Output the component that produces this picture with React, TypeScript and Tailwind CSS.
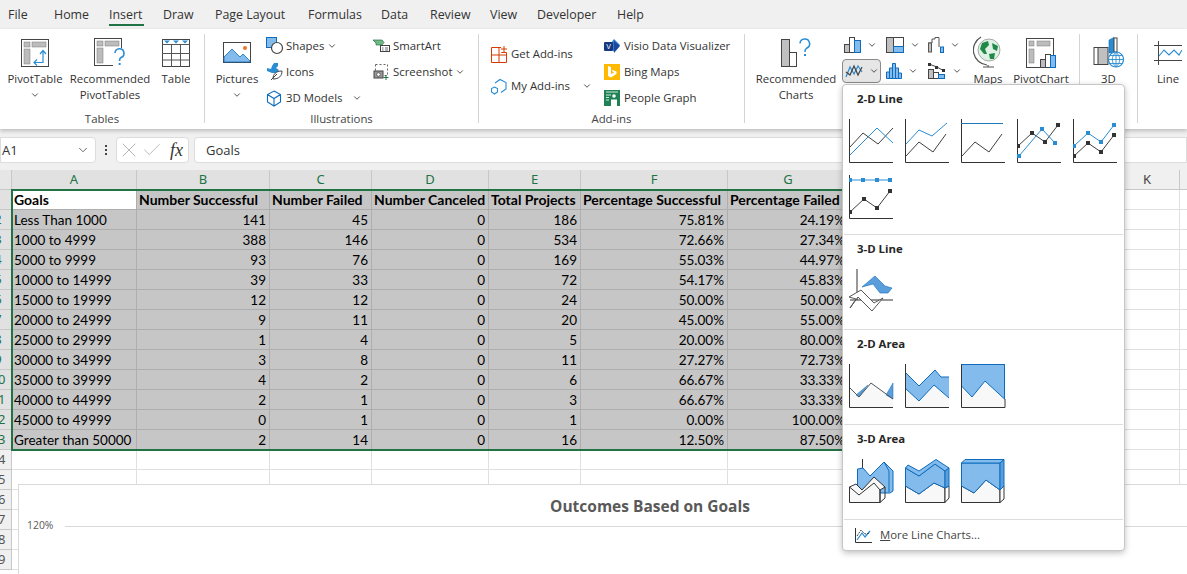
import React from 'react';
import { ChevronDown, Check, X } from 'lucide-react';

const tabs = [
  { name: 'File', cls: 'w-[54px] pl-[8px]' },
  { name: 'Home', cls: 'w-[55px]' },
  { name: 'Insert', cls: 'w-[54px]' },
  { name: 'Draw', cls: 'w-[52px]' },
  { name: 'Page Layout', cls: 'w-[93px]' },
  { name: 'Formulas', cls: 'w-[73px]' },
  { name: 'Data', cls: 'w-[49px]' },
  { name: 'Review', cls: 'w-[60px]' },
  { name: 'View', cls: 'w-[47px]' },
  { name: 'Developer', cls: 'w-[80px]' },
  { name: 'Help', cls: 'w-[40px]' },
];

const rows = [
  ['Less Than 1000', '141', '45', '0', '186', '75.81%', '24.19%'],
  ['1000 to 4999', '388', '146', '0', '534', '72.66%', '27.34%'],
  ['5000 to 9999', '93', '76', '0', '169', '55.03%', '44.97%'],
  ['10000 to 14999', '39', '33', '0', '72', '54.17%', '45.83%'],
  ['15000 to 19999', '12', '12', '0', '24', '50.00%', '50.00%'],
  ['20000 to 24999', '9', '11', '0', '20', '45.00%', '55.00%'],
  ['25000 to 29999', '1', '4', '0', '5', '20.00%', '80.00%'],
  ['30000 to 34999', '3', '8', '0', '11', '27.27%', '72.73%'],
  ['35000 to 39999', '4', '2', '0', '6', '66.67%', '33.33%'],
  ['40000 to 44999', '2', '1', '0', '3', '66.67%', '33.33%'],
  ['45000 to 49999', '0', '1', '0', '1', '0.00%', '100.00%'],
  ['Greater than 50000', '2', '14', '0', '16', '12.50%', '87.50%'],
];
const headers = ['Goals', 'Number Successful', 'Number Failed', 'Number Canceled', 'Total Projects', 'Percentage Successful', 'Percentage Failed'];
const columns = ['A', 'B', 'C', 'D', 'E', 'F', 'G', 'H', 'I', 'J', 'K', 'L'];

const GRAY = '#404040';
const BLUE = '#2a8dd4';
const AREA = '#83bcec';
const DARK = '#0f6cbd';

const Axes = () => <path d="M0.5 0V43.5H44" fill="none" stroke="#333" strokeWidth="1" />;
const Dots = ({ pts, color }: { pts: number[][]; color: string }) => (
  <>
    {pts.map(([x, y]) => (
      <rect key={`${x}-${y}`} x={x - 2} y={y - 2} width="4" height="4" fill={color} />
    ))}
  </>
);
const Glyph: React.FC<{ children: React.ReactNode }> = ({ children }) => (
  <svg width="46" height="46" viewBox="0 0 46 46" className="block">{children}</svg>
);
const Line = ({ d, c, w = 1 }: { d: string; c: string; w?: number }) => <polyline points={d} fill="none" stroke={c} strokeWidth={w} />;

const Line1 = () => <Glyph><Axes /><Line d="1,28 14,14 29,25 44,9" c={GRAY} /><Line d="1,36 28,9 44,24" c={BLUE} /></Glyph>;
const Line2 = () => <Glyph><Axes /><Line d="1,25 14,11 27,17 42,4" c={BLUE} /><Line d="1,37 14,23 28,33 41,15" c={GRAY} /></Glyph>;
const Line3 = () => <Glyph><Axes /><Line d="0,4.5 42,4.5" c="#1f78b8" /><Line d="1,37 14,23 28,33 41,15" c={GRAY} /></Glyph>;
const Line4 = () => {
  const g = [[1, 27], [15, 14], [28, 23], [41, 6]];
  const b = [[2, 37], [25, 10], [38, 24]];
  return <Glyph><Axes /><Line d="1,27 15,14 28,23 41,6" c={GRAY} /><Line d="2,37 25,10 38,24" c={BLUE} /><Dots pts={g} color="#333" /><Dots pts={b} color={BLUE} /></Glyph>;
};
const Line5 = () => {
  const b = [[1, 27], [15, 14], [28, 23], [41, 6]];
  const g = [[1, 37], [15, 24], [28, 33], [41, 16]];
  return <Glyph><Axes /><Line d="1,27 15,14 28,23 41,6" c={BLUE} /><Line d="1,37 15,24 28,33 41,16" c={GRAY} /><Dots pts={b} color={BLUE} /><Dots pts={g} color="#333" /></Glyph>;
};
const Line6 = () => {
  const b = [[1, 5], [14, 5], [28, 5], [41, 5]];
  const g = [[1, 37], [15, 24], [28, 33], [41, 16]];
  return <Glyph><Axes /><Line d="1,5 41,5" c={BLUE} /><Line d="1,37 15,24 28,33 41,16" c={GRAY} /><Dots pts={b} color={BLUE} /><Dots pts={g} color="#333" /></Glyph>;
};
const Line3D = () => (
  <Glyph>
    <path d="M8 0V31M1 31H44" fill="none" stroke="#333" />
    <polygon points="13,18 26,7 36,17 43,19 39,24 31,24 24,15" fill="#5a9fdc" stroke={DARK} strokeWidth="0.6" />
    <polygon points="0,28 12,21 25,34 34,29 23,42 9,28 1,39 7,30" fill="#fff" stroke="#555" />
  </Glyph>
);
const Area1 = () => (
  <Glyph>
    <polygon points="0,23 10,33 22,19 44,35 44,43 0,43" fill="#f8f8f8" />
    <polygon points="7,31 19,21 10,33" fill="#5a9fdc" stroke={DARK} strokeWidth="0.5" />
    <polygon points="37,31 44,19 44,35" fill="#5a9fdc" stroke={DARK} strokeWidth="0.5" />
    <Line d="0,23 10,33 22,19 44,35" c="#555" />
    <Axes />
  </Glyph>
);
const Area2 = () => (
  <Glyph>
    <polygon points="0,24 14,37 29,21 44,34 44,43 0,43" fill="#f8f8f8" />
    <polygon points="0,8 14,22 30,6 36,13 44,13 44,34 29,21 14,37 0,24" fill={AREA} />
    <Line d="0,8 14,22 30,6 36,13 44,13" c={DARK} />
    <Line d="0,24 14,37 29,21 44,34" c={DARK} />
    <Axes />
  </Glyph>
);
const Area3 = () => (
  <Glyph>
    <polygon points="0,22 11,33 24,17 43,35 43,43 0,43" fill="#f8f8f8" />
    <polygon points="0.5,0.5 43.5,0.5 43.5,35 24,17 11,33 0.5,22" fill={AREA} stroke={DARK} />
    <path d="M0.5 0V43.5H44V35" fill="none" stroke="#333" />
    <path d="M0.5 0.5H43.5V35" fill="none" stroke={DARK} />
  </Glyph>
);
const Area3D1 = () => (
  <Glyph>
    <path d="M13.5 0V10" stroke="#333" />
    <polygon points="8.5,10 14,9 21,17 35,3 44,12 44,32 41,34 8.5,34" fill={AREA} stroke={DARK} />
    <path d="M35 3L40 12V33" stroke={DARK} fill="none" />
    <polygon points="0.5,28 7,25 13,31 25,18 36,28 31,31 31,43.5 0.5,43.5" fill="#f8f8f8" stroke="#333" />
    <path d="M0.5 28L10 36L25 24L31 31V43.5L36 39V28" fill="none" stroke="#333" />
  </Glyph>
);
const Area3D2 = () => (
  <Glyph>
    <polygon points="0.5,27 14,35 29,24 40,29 40,43.5 0.5,43.5" fill="#f8f8f8" stroke="#333" />
    <polygon points="40,29 44,27 44,39 40,43.5" fill="#fff" stroke="#333" />
    <polygon points="0.5,9 14,17 30,5 40,12 40,29 29,24 14,35 0.5,27" fill={AREA} stroke={DARK} />
    <polygon points="0.5,9 3,6 14,12 31,0.5 44,9 40,12 30,5 14,17" fill={AREA} stroke={DARK} />
    <polygon points="40,12 44,9 44,27 40,29" fill="#5a9fdc" stroke={DARK} />
  </Glyph>
);
const Area3D3 = () => (
  <Glyph>
    <polygon points="0.5,27 13,34 25,21 39,31 39,43.5 0.5,43.5" fill="#f8f8f8" stroke="#333" />
    <polygon points="39,31 43,27 43,40 39,43.5" fill="#fff" stroke="#333" />
    <polygon points="0.5,4 39,4 39,31 25,21 13,34 0.5,27" fill={AREA} stroke={DARK} />
    <polygon points="0.5,4 4,0.5 43,0.5 39,4" fill={AREA} stroke={DARK} />
    <polygon points="39,4 43,0.5 43,27 39,31" fill="#5a9fdc" stroke={DARK} />
  </Glyph>
);

const PivotBase = () => (
  <>
    <rect x="0.5" y="0.5" width="27" height="27" fill="#fff" stroke="#444" />
    <rect x="3" y="3" width="6" height="5" fill="#bcbcbc" stroke="#777" strokeWidth="0.5" />
    <rect x="11" y="3" width="14" height="5" fill="#bcbcbc" stroke="#777" strokeWidth="0.5" />
    <rect x="3" y="10" width="6" height="15" fill="#bcbcbc" stroke="#777" strokeWidth="0.5" />
  </>
);
const PivotIcon = () => (
  <svg width="28" height="28" viewBox="0 0 28 28" className="block">
    <PivotBase />
    <path d="M13 23.5H22V12M19 15l3-3.5 3 3.5M16 20.5l-3 3 3 3" fill="none" stroke={BLUE} strokeWidth="1.2" />
  </svg>
);
const RecPivotIcon = () => (
  <svg width="32" height="30" viewBox="0 0 32 30" className="block">
    <PivotBase />
    <rect x="19" y="10" width="13" height="20" fill="#fff" />
    <path d="M21 15a4.5 4.5 0 1 1 6 4.5c-1.4.8-1.5 1.5-1.5 3.5" fill="none" stroke={BLUE} strokeWidth="1.6" />
    <rect x="24.6" y="25" width="2" height="2" fill={BLUE} />
  </svg>
);
const TableIcon = () => (
  <svg width="28" height="28" viewBox="0 0 28 28" className="block">
    <rect x="0.5" y="0.5" width="27" height="27" fill="#fff" stroke="#444" />
    <path d="M0 5.5H28M0 14.5H28M0 21H28M9.5 5V28M18.5 5V28" stroke="#555" fill="none" />
    <path d="M2 1.5h6l-3 3zM11 1.5h6l-3 3zM20 1.5h6l-3 3z" fill={BLUE} />
  </svg>
);
const PicturesIcon = () => (
  <svg width="28" height="22" viewBox="0 0 28 22" className="block">
    <rect x="0.5" y="0.5" width="27" height="20" fill="#fff" stroke="#444" />
    <path d="M1 20V15L9 7L17 15L20 12L27 19V20Z" fill={AREA} stroke={DARK} strokeWidth="0.8" />
    <circle cx="22" cy="6" r="2" fill="#e8762c" />
  </svg>
);
const ShapesIcon = () => (
  <svg width="18" height="18" viewBox="0 0 18 18" className="block">
    <rect x="0.5" y="0.5" width="10" height="10" fill={AREA} stroke={DARK} />
    <circle cx="11" cy="11" r="5.5" fill="#fff" stroke="#444" strokeWidth="1.2" />
  </svg>
);
const IconsIcon = () => (
  <svg width="18" height="18" viewBox="0 0 18 18" className="block">
    <path d="M8 0h4v3l-2 2 3 2-2 3H6L1 8V5l4 1 1-3z" fill={BLUE} />
    <path d="M7 16c0-5 3-8 9-8 0 5-3 8-9 8zM5 17l6-6" fill="#fff" stroke="#444" />
  </svg>
);
const CubeIcon = () => (
  <svg width="16" height="17" viewBox="0 0 16 17" className="block">
    <path d="M8 1L14.5 4.5V12L8 16L1.5 12V4.5ZM1.5 4.5L8 8.5L14.5 4.5M8 8.5V16" fill="none" stroke={DARK} strokeWidth="1.1" />
  </svg>
);
const SmartArtIcon = () => (
  <svg width="18" height="14" viewBox="0 0 18 14" className="block">
    <path d="M0 1H9L11 3.5L9 6H3L3 4Z" fill="#72b886" stroke="#217346" strokeWidth="0.7" />
    <rect x="7.5" y="6.5" width="9" height="6" fill="#fff" stroke="#444" />
    <path d="M9 9H10.5M12 9H15M9 11H10.5M12 11H15" stroke="#444" strokeWidth="0.8" />
  </svg>
);
const ScreenshotIcon = () => (
  <svg width="16" height="18" viewBox="0 0 16 18" className="block">
    <rect x="2.5" y="1.5" width="12" height="11" fill="none" stroke="#666" strokeDasharray="2 2" />
    <rect x="1" y="8" width="9" height="7" fill="#9a9a9a" stroke="#444" />
    <circle cx="5.5" cy="11.5" r="1.8" fill="#fff" stroke="#444" strokeWidth="0.7" />
    <path d="M13 12V17M10.5 14.5H15.5" stroke="#217346" />
  </svg>
);
const GetAddInsIcon = () => (
  <svg width="16" height="17" viewBox="0 0 16 17" className="block">
    <path d="M0.5 1.5H10.5V6.5H15.5V16.5H0.5ZM0.5 9H15.5M8 1.5V16.5" fill="none" stroke="#d83b01" />
    <rect x="10" y="0" width="6" height="6" fill="#fff" />
    <path d="M13 0V6M10 3H16" fill="none" stroke="#d83b01" />
  </svg>
);
const MyAddInsIcon = () => (
  <svg width="16" height="17" viewBox="0 0 16 17" className="block">
    <path d="M4 5L9 1.5L15 4.5V11L10 14.5" fill="none" stroke={BLUE} strokeWidth="1.1" />
    <path d="M3.5 9L6.5 10.5V14L3.5 16L0.5 14V10.5Z" fill="none" stroke={BLUE} strokeWidth="1.1" />
  </svg>
);
const VisioIcon = () => (
  <svg width="16" height="15" viewBox="0 0 16 15" className="block">
    <path d="M10 0L16 6L10 13L5 7Z" fill="#2b7cd3" />
    <path d="M10 2L16 7L10 14Z" fill="#1b4a9c" />
    <rect x="0" y="3" width="9" height="9" rx="1" fill="#17387f" />
    <text x="4.5" y="10" fontSize="7" fill="#fff" textAnchor="middle" fontFamily="Liberation Sans, sans-serif">V</text>
  </svg>
);
const BingIcon = () => (
  <svg width="16" height="16" viewBox="0 0 16 16" className="block">
    <rect width="16" height="16" fill="#ffb900" />
    <path d="M4 2L7 3V10L10 8.5L8.5 7.5L7.8 5.8L12.5 7.5V10L7 13.5L4 12Z" fill="#fff" />
  </svg>
);
const PeopleIcon = () => (
  <svg width="16" height="16" viewBox="0 0 16 16" className="block">
    <rect width="16" height="16" fill="#1e8255" />
    <path d="M2 2H14M2 5H7M2 7.5H5M2 10H5" stroke="#cfe7da" strokeWidth="1" />
    <circle cx="10" cy="6" r="1.8" fill="#fff" />
    <path d="M7 16V9.5H13V16Z" fill="#fff" />
  </svg>
);
const RecChartIcon = () => (
  <svg width="31" height="30" viewBox="0 0 31 30" className="block">
    <rect x="0.5" y="1.5" width="8" height="27" fill="#c0c0c0" stroke="#444" />
    <rect x="8.5" y="14.5" width="7" height="14" fill="#fff" stroke="#444" />
    <path d="M19 5.5a4.8 4.8 0 1 1 6.5 4.8c-1.5.8-1.6 1.7-1.6 3.7" fill="none" stroke={BLUE} strokeWidth="1.5" />
    <rect x="23" y="16" width="2" height="2" fill={BLUE} />
  </svg>
);
const ColumnMini = () => (
  <svg width="17" height="16" viewBox="0 0 17 16" className="block">
    <rect x="0.5" y="7.5" width="5" height="8" fill="#c0c0c0" stroke="#444" />
    <rect x="5.5" y="0.5" width="5" height="15" fill="#fff" stroke="#444" />
    <rect x="10.5" y="3.5" width="6" height="12" fill={AREA} stroke={DARK} />
  </svg>
);
const TreeMini = () => (
  <svg width="18" height="16" viewBox="0 0 18 16" className="block">
    <rect x="0.5" y="0.5" width="7" height="15" fill="#c0c0c0" stroke="#444" />
    <rect x="7.5" y="0.5" width="10" height="9" fill="#fff" stroke="#444" />
    <rect x="7.5" y="9.5" width="10" height="6" fill={AREA} stroke={DARK} />
  </svg>
);
const WaterfallMini = () => (
  <svg width="16" height="16" viewBox="0 0 16 16" className="block">
    <path d="M0.5 15V6H4V2H7V0.5H11V10" fill="none" stroke="#555" />
    <rect x="0.5" y="6" width="3" height="9" fill="#c0c0c0" stroke="#555" />
    <rect x="12.5" y="10" width="3" height="5.5" fill={AREA} stroke={DARK} />
  </svg>
);
const LineMini = () => (
  <svg width="18" height="16" viewBox="0 0 18 16" className="block">
    <path d="M1 14L5 4L9 11L13 3L17 9" fill="none" stroke={BLUE} strokeWidth="1.2" />
    <path d="M1 9L5 12L9 3L13 12L17 4" fill="none" stroke="#444" strokeWidth="1.2" />
  </svg>
);
const HistMini = () => (
  <svg width="16" height="16" viewBox="0 0 16 16" className="block">
    <path d="M0.5 15.5V9H3.5V5H6.5V0.5H9.5V5H12.5V10H15.5V15.5ZM3.5 9V15.5M6.5 5V15.5M9.5 5V15.5M12.5 10V15.5" fill={AREA} stroke={DARK} />
  </svg>
);
const ComboMini = () => (
  <svg width="18" height="16" viewBox="0 0 18 16" className="block">
    <rect x="0.5" y="6.5" width="5" height="9" fill="#c0c0c0" stroke="#444" />
    <rect x="5.5" y="9.5" width="5" height="6" fill="#fff" stroke="#444" />
    <rect x="10.5" y="11.5" width="6" height="4" fill={AREA} stroke={DARK} />
    <path d="M1 1L9 4L16 8" stroke="#444" fill="none" />
    <rect x="0" y="0" width="3" height="3" fill="#333" />
    <rect x="7" y="3" width="3" height="3" fill="#333" />
    <rect x="14" y="6" width="3" height="3" fill="#333" />
  </svg>
);
const GlobeIcon = () => (
  <svg width="30" height="34" viewBox="0 0 30 34" className="block">
    <path d="M8 1A15 15 0 0 0 14 29M10 31H21M15 29V31" fill="none" stroke="#555" strokeWidth="1.2" />
    <circle cx="16" cy="14" r="11" fill="#dff0e4" stroke="#777" strokeWidth="0.6" />
    <path d="M9 7L15 5L16 9L12 13L14 18L11 18L7 13ZM19 7L25 10L24 15L20 13ZM16 18L22 17L21 23L17 23Z" fill="#1f8a47" />
  </svg>
);
const PivotChartIcon = () => (
  <svg width="30" height="30" viewBox="0 0 30 30" className="block">
    <rect x="0.5" y="0.5" width="27" height="29" fill="#fff" stroke="#444" />
    <rect x="3" y="3" width="5" height="5" fill="#bcbcbc" stroke="#777" strokeWidth="0.5" />
    <rect x="11" y="3" width="13" height="5" fill="#bcbcbc" stroke="#777" strokeWidth="0.5" />
    <rect x="3" y="11" width="5" height="14" fill="#bcbcbc" stroke="#777" strokeWidth="0.5" />
    <rect x="14.5" y="21.5" width="5" height="8" fill="#bcbcbc" stroke="#444" />
    <rect x="19.5" y="16.5" width="5" height="13" fill="#fff" stroke="#444" />
    <rect x="24.5" y="17.5" width="5" height="12" fill={AREA} stroke={DARK} />
  </svg>
);
const ThreeDIcon = () => (
  <svg width="31" height="31" viewBox="0 0 31 31" className="block">
    <rect x="1" y="10.5" width="7" height="17" fill="#fff" stroke="#444" />
    <rect x="5" y="10.5" width="10" height="17" fill="#c0c0c0" stroke="#444" />
    <path d="M16 3L21 0.5V16H16Z" fill={BLUE} stroke={DARK} strokeWidth="0.6" />
    <rect x="21" y="1" width="3" height="14" fill="#fff" stroke="#444" />
    <circle cx="23" cy="22.5" r="7.5" fill="#fff" stroke={BLUE} strokeWidth="1.2" />
    <path d="M15.5 22.5H30.5M16.5 18.5H29.5M16.5 26.5H29.5M23 15V30M23 15C18 20 18 25 23 30M23 15C28 20 28 25 23 30" fill="none" stroke={BLUE} strokeWidth="0.9" />
  </svg>
);
const SparkIcon = () => (
  <svg width="28" height="24" viewBox="0 0 28 24" className="block">
    <path d="M4.5 0V24M0 4.5H28M0 19.5H28" stroke="#444" fill="none" />
    <path d="M5 15L10 9L15 14L20 9L25 14L28 9" stroke={BLUE} fill="none" strokeWidth="1.1" />
  </svg>
);
const MoreIcon = () => (
  <svg width="17" height="15" viewBox="0 0 17 15" className="block">
    <path d="M0.5 0V14.5H17" stroke="#333" fill="none" />
    <path d="M2 12L7 5L10 9L15 3" stroke={BLUE} fill="none" strokeWidth="1.2" />
    <path d="M2 8L6 2L10 6L15 5" stroke="#444" fill="none" strokeDasharray="2 1" />
  </svg>
);

const Chev = ({ className = '' }: { className?: string }) => <ChevronDown size={10} strokeWidth={2} className={`text-[#333] ${className}`} />;

const Separator = () => <div className="w-px h-[89px] mt-[5px] bg-[#d4d4d4] shrink-0" />;

const Big: React.FC<{ width: string; icon: React.ReactNode; lines: string[]; chevron?: boolean }> = ({ width, icon, lines, chevron }) => (
  <div className={`${width} shrink-0 flex flex-col items-center`}>
    <div className="h-[42px] flex items-center justify-center pt-[5px]">{icon}</div>
    {lines.map((l) => (
      <div key={l} className="leading-[16px] whitespace-nowrap">{l}</div>
    ))}
    {chevron && <Chev className="mt-[3px]" />}
  </div>
);

const Small: React.FC<{ icon: React.ReactNode; label: string; chevron?: boolean; gapCls?: string }> = ({ icon, label, chevron, gapCls = 'ml-[3px]' }) => (
  <div className="h-[26px] flex items-center whitespace-nowrap">
    <div className="w-[20px] flex items-center">{icon}</div>
    <span>{label}</span>
    {chevron && <Chev className={gapCls} />}
  </div>
);

const Group: React.FC<{ width: string; label?: string; children: React.ReactNode }> = ({ width, label, children }) => (
  <div className={`${width} shrink-0 flex flex-col`}>
    <div className="h-[82px] flex">{children}</div>
    <div className="text-center leading-[16px] text-[#444]">{label}</div>
  </div>
);

const MiniCell: React.FC<{ children: React.ReactNode; active?: boolean; width?: string }> = ({ children, active, width = 'w-[42px]' }) => (
  <div className={`${width} h-[24px] flex items-center gap-[6px] pl-[2px] ${active ? 'rounded-[4px] bg-[#e6e6e6] border border-[#8a8a8a]' : ''}`}>
    {children}
    <Chev />
  </div>
);

const Ribbon = () => (
  <div className="relative z-10 h-[100px] flex bg-white text-[11.4px] text-[#333] shadow-[0_2px_4px_rgba(0,0,0,0.22)] overflow-hidden">
    <Group width="w-[204px]" label="Tables">
      <Big width="w-[70px]" icon={<PivotIcon />} lines={['PivotTable']} chevron />
      <Big width="w-[80px]" icon={<RecPivotIcon />} lines={['Recommended', 'PivotTables']} />
      <Big width="w-[52px]" icon={<TableIcon />} lines={['Table']} />
    </Group>
    <Separator />
    <Group width="w-[273px]" label="Illustrations">
      <Big width="w-[58px] ml-[3px]" icon={<PicturesIcon />} lines={['Pictures']} chevron />
      <div className="w-[107px] pt-[4px]">
        <Small icon={<ShapesIcon />} label="Shapes" chevron />
        <Small icon={<IconsIcon />} label="Icons" />
        <Small icon={<CubeIcon />} label="3D Models" chevron gapCls="ml-[9px]" />
      </div>
      <div className="pt-[4px]">
        <Small icon={<SmartArtIcon />} label="SmartArt" />
        <Small icon={<ScreenshotIcon />} label="Screenshot" chevron />
      </div>
    </Group>
    <Separator />
    <Group width="w-[265px]" label="Add-ins">
      <div className="w-[113px] ml-[12px] pt-[12px] flex flex-col gap-[6px]">
        <Small icon={<GetAddInsIcon />} label="Get Add-ins" />
        <Small icon={<MyAddInsIcon />} label="My Add-ins" chevron gapCls="ml-[12px]" />
      </div>
      <div className="pt-[4px]">
        <Small icon={<VisioIcon />} label="Visio Data Visualizer" />
        <Small icon={<BingIcon />} label="Bing Maps" />
        <Small icon={<PeopleIcon />} label="People Graph" />
      </div>
    </Group>
    <Separator />
    <Group width="w-[334px]">
      <Big width="w-[90px] ml-[6px]" icon={<RecChartIcon />} lines={['Recommended', 'Charts']} />
      <div className="w-[123px] ml-[1px] pt-[4px] flex flex-col gap-[2px]">
        <div className="flex">
          <MiniCell><ColumnMini /></MiniCell>
          <MiniCell><TreeMini /></MiniCell>
          <MiniCell width="w-[39px]"><WaterfallMini /></MiniCell>
        </div>
        <div className="flex">
          <MiniCell active width="w-[39px]"><LineMini /></MiniCell>
          <div className="w-[3px]" />
          <MiniCell><HistMini /></MiniCell>
          <MiniCell width="w-[39px]"><ComboMini /></MiniCell>
        </div>
      </div>
      <Big width="w-[46px]" icon={<GlobeIcon />} lines={['Maps', 'Chart']} />
      <Big width="w-[60px]" icon={<PivotChartIcon />} lines={['PivotChart']} />
    </Group>
    <Separator />
    <Group width="w-[57px]">
      <Big width="w-[57px]" icon={<ThreeDIcon />} lines={['3D', 'Maps']} />
    </Group>
    <Separator />
    <Group width="w-[60px]">
      <Big width="w-[60px]" icon={<SparkIcon />} lines={['Line']} />
    </Group>
  </div>
);

const FormulaBar = () => (
  <div className="h-[41px] pt-[8px] flex items-start bg-[#f0f0f0] text-[#333] text-[13px]">
    <div className="w-[96px] h-[26px] flex items-center justify-between pl-[1px] pr-[5px] bg-white border border-[#dcdcdc] rounded-r-[4px]">
      <span className="pt-[1px]">A1</span>
      <ChevronDown size={14} strokeWidth={1.5} className="text-[#555]" />
    </div>
    <div className="w-[20px] h-[26px] flex flex-col items-center justify-center gap-[2px]">
      <div className="w-[2px] h-[2px] bg-[#444]" />
      <div className="w-[2px] h-[2px] bg-[#444]" />
      <div className="w-[2px] h-[2px] bg-[#444]" />
    </div>
    <div className="w-[73px] h-[26px] flex items-center bg-white border border-[#dcdcdc] rounded-[4px]">
      <X size={24} strokeWidth={1} className="text-[#b5b5b5]" />
      <Check size={22} strokeWidth={1} className="text-[#b5b5b5]" />
      <span className="ml-[7px] font-['Liberation_Serif',serif] italic text-[18px] leading-none text-[#333]">fx</span>
    </div>
    <div className="ml-[5px] flex-1 h-[26px] flex items-center pl-[11px] pt-[1px] bg-white border border-[#dcdcdc] rounded-l-[4px]">Goals</div>
  </div>
);

const Cell: React.FC<{ children?: React.ReactNode; selected?: boolean; right?: boolean; bold?: boolean; white?: boolean }> = ({ children, selected, right, bold, white }) => (
  <div
    className={`h-[20px] pl-[2px] pr-[3px] whitespace-nowrap overflow-hidden border-r border-b ${
      selected ? 'border-[#aeaeae]' : 'border-[#e0e0e0]'
    } ${selected && !white ? 'bg-[#c6c6c6]' : 'bg-white'} ${right ? 'text-right' : ''} ${bold ? 'font-bold text-[14px] leading-[19px]' : 'leading-[21px]'}`}
  >
    {children}
  </div>
);

const RowHead = ({ n, selected }: { n: number; selected: boolean }) => (
  <div className={`h-[20px] overflow-hidden border-r border-b border-[#c8c8c8] ${selected ? 'bg-[#e1e1e1] text-[#217346]' : 'bg-[#f0f0f0] text-[#555]'}`}>
    <div className="w-[26px] ml-[-15px] text-center leading-[19px] text-[13px] font-['Noto_Sans',sans-serif]">{n}</div>
  </div>
);

const Sheet = () => (
  <div className="relative flex-1 overflow-hidden bg-white">
    <div className="grid grid-cols-[12px_125px_133px_102px_117px_92px_147px_121px_90px_90px_86px_65px_120px] font-['Lato','Open_Sans',sans-serif] text-[13.5px] text-black">
      <div className="h-[20px] bg-[#e6e6e6] border-r border-b border-[#c8c8c8]" />
      {columns.map((c, i) => (
        <div
          key={c}
          className={`h-[20px] text-center leading-[19px] text-[13px] font-['Noto_Sans',sans-serif] border-r border-b border-[#c8c8c8] ${
            i < 7 ? 'bg-[#e1e1e1] text-[#217346]' : 'bg-[#f0f0f0] text-[#444]'
          }`}
        >
          {c}
        </div>
      ))}
      <RowHead n={1} selected />
      {headers.map((h, i) => (
        <Cell key={h} selected bold white={i === 0}>{h}</Cell>
      ))}
      {columns.slice(7).map((c) => <Cell key={c} />)}
      {rows.map((r, ri) => (
        <React.Fragment key={r[0]}>
          <RowHead n={ri + 2} selected />
          {r.map((v, i) => (
            <Cell key={i} selected right={i > 0}>{v}</Cell>
          ))}
          {columns.slice(7).map((c) => <Cell key={c} />)}
        </React.Fragment>
      ))}
      {[14, 15, 16, 17, 18, 19].map((n) => (
        <React.Fragment key={n}>
          <RowHead n={n} selected={false} />
          {columns.map((c) => <Cell key={c} />)}
        </React.Fragment>
      ))}
    </div>
    {/* selection outline */}
    <div className="absolute left-[11px] top-[19px] w-[839px] h-[262px] border-2 border-[#217346] pointer-events-none" />
    {/* embedded chart */}
    <div className="absolute left-[18px] top-[314px] w-[1264px] h-[200px] bg-white border border-[#d9d9d9] font-['Open_Sans',sans-serif] text-[#595959]">
      <div className="h-[33px] pt-[10px] text-center font-bold text-[15.5px] leading-[22px]">Outcomes Based on Goals</div>
      <div className="flex items-center h-[16px]">
        <span className="ml-[8px] w-[38px] text-[10.4px]">120%</span>
        <div className="flex-1 h-px bg-[#d9d9d9]" />
      </div>
    </div>
  </div>
);

const MenuSection: React.FC<{ title: string; children: React.ReactNode; height: string }> = ({ title, children, height }) => (
  <div className={`${height} border-b border-[#dcdcdc] mx-px`}>
    <div className="pl-[13px] pt-[5px] h-[34px] font-bold text-[11.4px] leading-[18px] text-[#262626]">{title}</div>
    <div className="pl-[5px] flex flex-wrap w-[286px] gap-y-[10px]">{children}</div>
  </div>
);
const Tile: React.FC<{ children: React.ReactNode }> = ({ children }) => <div className="w-[56px]">{children}</div>;

const ChartMenu = () => (
  <div className="absolute left-[842px] top-[84px] z-20 w-[283px] h-[467px] bg-white border border-[#c6c6c6] rounded-[4px] shadow-[0_2px_6px_rgba(0,0,0,0.25)] font-['Open_Sans',sans-serif]">
    <MenuSection title="2-D Line" height="h-[150px]">
      <Tile><Line1 /></Tile>
      <Tile><Line2 /></Tile>
      <Tile><Line3 /></Tile>
      <Tile><Line4 /></Tile>
      <Tile><Line5 /></Tile>
      <Tile><Line6 /></Tile>
    </MenuSection>
    <MenuSection title="3-D Line" height="h-[95px]">
      <Tile><Line3D /></Tile>
    </MenuSection>
    <MenuSection title="2-D Area" height="h-[95px]">
      <Tile><Area1 /></Tile>
      <Tile><Area2 /></Tile>
      <Tile><Area3 /></Tile>
    </MenuSection>
    <MenuSection title="3-D Area" height="h-[95px]">
      <Tile><Area3D1 /></Tile>
      <Tile><Area3D2 /></Tile>
      <Tile><Area3D3 /></Tile>
    </MenuSection>
    <div className="h-[30px] flex items-center pl-[12px] text-[11.4px] text-[#444]">
      <MoreIcon />
      <span className="ml-[8px]"><span className="underline">M</span>ore Line Charts...</span>
    </div>
  </div>
);

export default function App() {
  return (
    <div className="relative w-[1187px] h-[574px] flex flex-col overflow-hidden bg-white font-['Open_Sans',sans-serif]">
      <div className="h-[29px] flex bg-[#f0f0f0] text-[12.4px] text-[#333]">
        {tabs.map((t) => (
          <div key={t.name} className={`${t.cls} shrink-0 leading-[29px] relative whitespace-nowrap`}>
            {t.name}
            {t.name === 'Insert' && <div className="absolute left-0 top-[24px] w-[35px] h-[2px] bg-[#217346]" />}
          </div>
        ))}
      </div>
      <Ribbon />
      <FormulaBar />
      <Sheet />
      <ChartMenu />
    </div>
  );
}
